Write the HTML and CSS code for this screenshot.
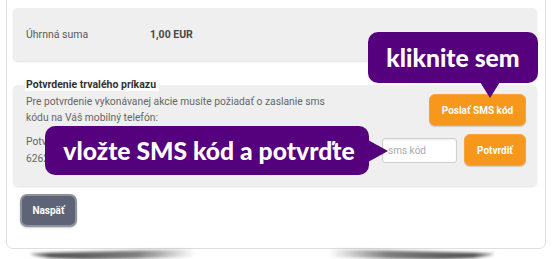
FILE: index.html
```
<!DOCTYPE html>
<html lang="sk">
<head>
	<meta charset="utf-8" />
	<title>Potvrdenie trvalého príkazu</title>
	<link rel="stylesheet" href="styles.css">
</head>
<body>
	<div class="page">
		<div class="card">
			<div class="panel summary">
				<span class="label">Úhrnná suma</span>
				<span class="amount">1,00 EUR</span>
			</div>

			<fieldset class="panel confirm">
				<legend>Potvrdenie trvalého príkazu</legend>
				<div class="row">
					<p class="info">Pre potvrdenie vykonávanej akcie musíte požiadať o zaslanie sms<br>kódu na Váš mobilný telefón:</p>
					<button class="btn orange send">Poslať SMS kód</button>
				</div>
				<div class="row">
					<p class="info second">Potvrďte akciu kódom<br>6262</p>
					<input class="smsInput" type="text" placeholder="sms kód">
					<button class="btn orange confirmBtn">Potvrdiť</button>
				</div>
			</fieldset>

			<button class="btn back">Naspäť</button>
		</div>
		<div class="cardShadow">
			<span class="lift left"></span>
			<span class="lift right"></span>
		</div>
	</div>

	<!-- tooltips laid over the form -->
	<div class="hint hintSend">kliknite sem</div>
	<div class="hint hintCode">vložte SMS kód a potvrďte</div>
</body>
</html>
```

FILE: styles.css
```
body{
	margin: 0;
	background: #fff;
	font-family: Roboto, "Liberation Sans", sans-serif;
}

.page{
	padding: 0 0 2px 6px;
	margin-top: -10px;
}

.card{
	box-sizing: border-box;
	width: 540px;
	padding: 17px 8px 21px 6px;
	background: #fff;
	border: 1px solid #dedede;
	border-radius: 0 0 7px 7px;
}

/* lifted corner shadows under the card */
.cardShadow{
	display: flex;
	justify-content: space-between;
	width: 540px;
	height: 10px;
	padding: 0 52px 0 24px;
	box-sizing: border-box;
}

.lift{
	width: 165px;
	height: 8px;
	filter: blur(1.5px);
}

.lift.left{
	background: linear-gradient(to right, rgba(0,0,0,0.3), rgba(0,0,0,0.7) 12%, rgba(0,0,0,0.5) 65%, rgba(0,0,0,0));
	border-radius: 0 0 0 60% / 0 0 0 100%;
	transform: skewY(-1.5deg);
	transform-origin: right top;
}

.lift.right{
	background: linear-gradient(to left, rgba(0,0,0,0.3), rgba(0,0,0,0.7) 12%, rgba(0,0,0,0.5) 65%, rgba(0,0,0,0));
	border-radius: 0 0 60% 0 / 0 0 100% 0;
	transform: skewY(1.5deg);
	transform-origin: left top;
}

.panel{
	background: #efefef;
	border-radius: 5px;
	box-shadow: 0 1px 2px rgba(0,0,0,0.12);
}

.summary{
	display: flex;
	align-items: center;
	height: 53px;
	padding-left: 13px;
	font-size: 10.5px;
}

.summary .label{
	width: 124px;
	color: #5a5a5a;
}

.summary .amount{
	font-weight: bold;
	color: #474747;
}

.confirm{
	margin: 17px 0 0 0;
	padding: 3px 11px 19px 13px;
	border: 0;
	min-width: 0;
}

.confirm legend{
	padding: 0 3px 0 1px;
	margin-left: -1px;
	background: #fff;
	font-size: 10.5px;
	font-weight: bold;
	line-height: 13px;
	color: #333;
}

.row{
	display: flex;
	align-items: center;
}

.row + .row{
	margin-top: 7px;
}

.info{
	flex: 1;
	margin: 0;
	font-size: 10.3px;
	line-height: 16px;
	color: #666;
}

.info.second{
	line-height: 17px;
}

.btn{
	font-family: Roboto, "Liberation Sans", sans-serif;
	font-weight: bold;
	font-size: 10px;
	color: #fff;
	cursor: pointer;
}

.orange{
	height: 32px;
	background: #f7981d;
	border: 1px solid #f5a440;
	border-radius: 6px;
	box-shadow: 0 1px 1px rgba(0,0,0,0.15);
}

.send{
	width: 97px;
}

.confirmBtn{
	width: 62px;
	margin-left: 7px;
}

.smsInput{
	box-sizing: border-box;
	width: 75px;
	height: 25px;
	padding: 0 5px;
	border: 1px solid #cfcfcf;
	border-radius: 3px;
	background: #fff;
	font-family: Roboto, "Liberation Sans", sans-serif;
	font-size: 10px;
	box-shadow: inset 0 1px 2px rgba(0,0,0,0.08);
}

.smsInput::placeholder{
	color: #aaa;
}

.back{
	display: block;
	width: 57px;
	height: 33px;
	margin: 8px 0 0 7px;
	background: #5e6476;
	border: 2px solid #8d92a0;
	border-radius: 7px;
	box-shadow: 0 1px 2px rgba(0,0,0,0.2);
}

/* purple callouts */
.hint{
	position: absolute;
	box-sizing: border-box;
	background: #55007c;
	border-radius: 10px;
	color: #fff;
	font-family: Lato, "Open Sans", sans-serif;
	font-weight: 900;
	font-size: 24.7px;
	display: flex;
	align-items: center;
	justify-content: center;
}

.hint::after{
	content: "";
	position: absolute;
	width: 0;
	height: 0;
}

.hintSend{
	left: 368px;
	top: 32px;
	width: 170px;
	height: 51px;
}

.hintSend::after{
	left: 112px;
	top: 50px;
	border-left: 10px solid transparent;
	border-right: 10px solid transparent;
	border-top: 16px solid #55007c;
}

.hintCode{
	left: 45px;
	top: 126px;
	width: 324px;
	height: 49px;
	padding-left: 4px;
}

.hintCode::after{
	left: 323px;
	top: 14px;
	border-top: 11px solid transparent;
	border-bottom: 11px solid transparent;
	border-left: 20px solid #55007c;
}
```
